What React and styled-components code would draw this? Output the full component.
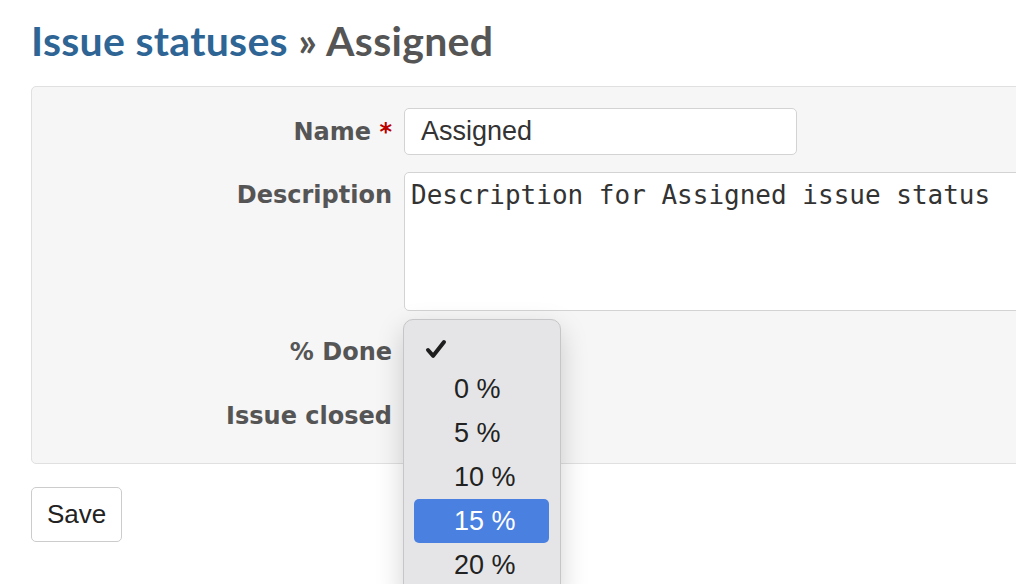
import React from 'react';
import styled, { createGlobalStyle } from 'styled-components';

const GlobalStyle = createGlobalStyle`
  body {
    margin: 0;
    padding: 0;
    background: #fff;
  }
`;

const Page = styled.div`
  height: 584px;
  box-sizing: border-box;
  overflow: hidden;
  padding: 17px 0 0 31px;
  font-family: "DejaVu Sans", Verdana, sans-serif;
  color: #555;
`;

const Title = styled.h2`
  margin: 0 0 21px 0;
  font-family: Lato, "Open Sans", sans-serif;
  font-weight: 700;
  font-size: 41px;
  line-height: 48px;
  letter-spacing: 0.3px;
  color: #555;
  white-space: nowrap;
`;

const Crumb = styled.span`
  color: #2e6595;
`;

const Box = styled.div`
  width: 1100px;
  display: grid;
  grid-template-columns: 360px 1fr;
  grid-template-rows: 47px 139px 47px 47px;
  column-gap: 12px;
  row-gap: 17px;
  padding: 21px 0 24px 0;
  background: #f6f6f6;
  border: 1px solid #e0e0e0;
  border-radius: 5px;
`;

const Label = styled.label`
  font-weight: 700;
  font-size: 24px;
  color: #555;
  text-align: right;
  white-space: nowrap;
  align-self: ${p => (p.$top ? 'start' : 'center')};
  padding-top: ${p => (p.$top ? '9px' : '0')};
`;

const Required = styled.span`
  color: #bb0000;
`;

const TextInput = styled.div`
  width: 393px;
  height: 47px;
  box-sizing: border-box;
  display: flex;
  align-items: center;
  padding: 0 16px;
  background: #fff;
  border: 1px solid #d3d3d3;
  border-radius: 5px;
  font-family: "Liberation Sans", Arial, sans-serif;
  font-size: 27px;
  color: #333;
`;

const TextArea = styled.div`
  width: 700px;
  height: 139px;
  box-sizing: border-box;
  padding: 5px 6px;
  background: #fff;
  border: 1px solid #d3d3d3;
  border-radius: 5px;
  font-family: "DejaVu Sans Mono", "Liberation Mono", monospace;
  font-size: 26px;
  line-height: 34px;
  color: #333;
  white-space: pre;
`;

const SelectWrap = styled.div`
  position: relative;
  width: 140px;
  height: 47px;
`;

const SelectFace = styled.div`
  width: 100%;
  height: 100%;
  box-sizing: border-box;
  border: 1px solid #d3d3d3;
  border-radius: 5px;
  background: #fff;
`;

const Popup = styled.ul`
  position: absolute;
  left: -1px;
  top: -9px;
  width: 158px;
  box-sizing: border-box;
  margin: 0;
  padding: 3px 11px 10px 10px;
  list-style: none;
  background: #e5e5e7;
  border: 1px solid #c6c6c8;
  border-radius: 10px;
  box-shadow: 0 10px 28px rgba(0, 0, 0, 0.18);
  z-index: 10;
`;

const Option = styled.li`
  position: relative;
  height: 44px;
  display: flex;
  align-items: center;
  padding-left: 40px;
  border-radius: 5px;
  font-family: "Liberation Sans", Arial, sans-serif;
  font-size: 27px;
  color: ${p => (p.$active ? '#fff' : '#222')};
  background: ${p => (p.$active ? '#4a80e0' : 'transparent')};
`;

const Check = styled.svg`
  position: absolute;
  left: 11px;
  top: 16px;
`;

const CheckField = styled.div`
  display: flex;
  align-items: center;
`;

const CheckBox = styled.div`
  width: 18px;
  height: 18px;
  border: 1px solid #bbb;
  border-radius: 4px;
  background: #fff;
`;

const SaveButton = styled.button`
  margin-top: 23px;
  height: 55px;
  padding: 0 15px;
  background: #fff;
  border: 1px solid #ccc;
  border-radius: 5px;
  font-family: "Liberation Sans", Arial, sans-serif;
  font-size: 26px;
  color: #222;
`;

const options = ['', '0 %', '5 %', '10 %', '15 %', '20 %'];

export default function App() {
  return (
    <Page>
      <GlobalStyle />
      <Title>
        <Crumb>Issue statuses</Crumb> » Assigned
      </Title>
      <Box>
        <Label>
          Name <Required>*</Required>
        </Label>
        <TextInput>Assigned</TextInput>

        <Label $top>Description</Label>
        <TextArea>Description for Assigned issue status</TextArea>

        <Label>% Done</Label>
        <SelectWrap>
          <SelectFace />
          <Popup>
            {options.map((opt, i) => (
              <Option key={i} $active={opt === '15 %'}>
                {i === 0 && (
                  <Check width="22" height="20" viewBox="0 0 22 20">
                    <path
                      d="M3 11 L8.2 16.8 L19 3"
                      fill="none"
                      stroke="#1e1e1e"
                      strokeWidth="4"
                      strokeLinecap="round"
                      strokeLinejoin="round"
                    />
                  </Check>
                )}
                {opt}
              </Option>
            ))}
          </Popup>
        </SelectWrap>

        <Label>Issue closed</Label>
        <CheckField>
          <CheckBox />
        </CheckField>
      </Box>
      <SaveButton>Save</SaveButton>
    </Page>
  );
}
